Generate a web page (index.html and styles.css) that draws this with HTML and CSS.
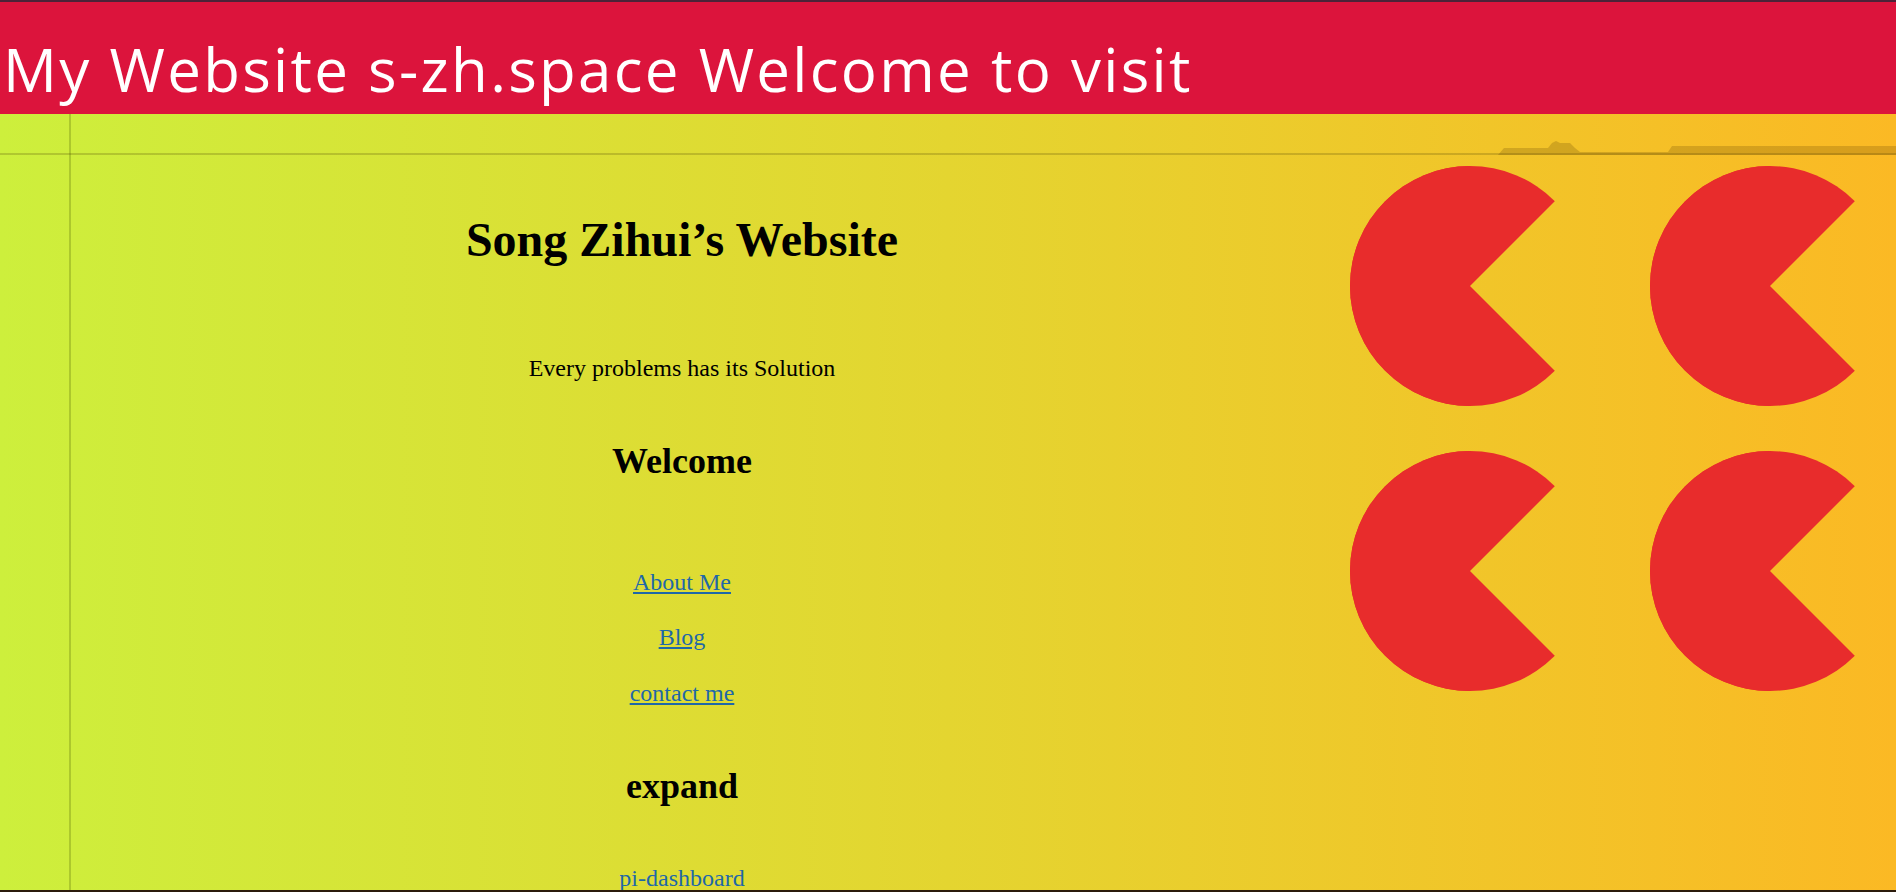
FILE: index.html
```html
<!DOCTYPE html>
<html lang="en">
<head>
<meta charset="utf-8">
<title>My Website s-zh.space</title>
<link rel="stylesheet" href="styles.css">
</head>
<body>
<div class="frame-top"></div>
<header class="banner">
  <h1 class="banner-title">My Website s-zh.space Welcome to visit</h1>
</header>
<div class="stage">
  <svg class="skyline" viewBox="1400 130 496 44" width="496" height="44" aria-hidden="true">
    <path d="M1400 155 L1498 155 L1504 148 L1548 148 L1552 143 L1556 141 L1560 143 L1570 143 L1575 148 L1580 152 L1668 152 L1672 146 L1896 146 L1896 155 Z" fill="rgba(90,60,0,0.22)"/>
  </svg>
  <main class="content">
    <h1 class="site-title">Song Zihui’s Website</h1>
    <p class="motto">Every problems has its Solution</p>
    <h2 class="section welcome">Welcome</h2>
    <a class="nav-link about" href="#">About Me</a>
    <a class="nav-link blog" href="#">Blog</a>
    <a class="nav-link contact" href="#">contact me</a>
    <h2 class="section expand">expand</h2>
    <a class="nav-link plain pi" href="#">pi-dashboard</a>
  </main>
  <aside class="pacmen">
    <div class="pacman"></div>
    <div class="pacman"></div>
    <div class="pacman"></div>
    <div class="pacman"></div>
  </aside>
</div>
<div class="frame-bottom"></div>
</body>
</html>
```
FILE: styles.css
```css
html, body {
  margin: 0;
  padding: 0;
}

body {
  height: 100vh;
  overflow: hidden;
  display: flex;
  flex-direction: column;
  font-family: "Liberation Serif", "Times New Roman", serif;
  background: linear-gradient(to right, #cdef3c 0%, #e4d530 50%, #fbb924 100%);
}

.frame-top {
  height: 2px;
  flex: none;
  background: #4d2238;
}

.frame-bottom {
  height: 2px;
  flex: none;
  background: #2b1b0c;
}

.banner {
  flex: none;
  height: 112px;
  background: #dc143c;
  box-sizing: border-box;
  padding-top: 37px;
}

.banner-title {
  margin: 0;
  padding-left: 3px;
  font-family: "Open Sans", "DejaVu Sans", sans-serif;
  font-weight: 400;
  font-size: 60px;
  line-height: 60px;
  letter-spacing: 2.3px;
  color: #ffffff;
  white-space: nowrap;
}

.stage {
  position: relative;
  flex: 1;
  min-height: 0;
  overflow: hidden;
  display: flex;
  background-image:
    linear-gradient(to bottom, transparent 39px, rgba(70, 60, 0, 0.22) 39px, rgba(70, 60, 0, 0.22) 41px, transparent 41px),
    linear-gradient(to right, transparent 69px, rgba(70, 90, 0, 0.25) 69px, rgba(70, 90, 0, 0.25) 71px, transparent 71px);
}

.skyline {
  position: absolute;
  top: 16px;
  right: 0;
  pointer-events: none;
}

.content {
  position: relative;
  width: 1350px;
  flex: none;
  box-sizing: border-box;
  padding-left: 14px;
  display: flex;
  flex-direction: column;
  align-items: center;
  text-align: center;
}

.site-title {
  margin: 102px 0 0;
  font-size: 48px;
  line-height: 48px;
  font-weight: 700;
  color: #000;
}

.motto {
  margin: 92px 0 0;
  font-size: 24px;
  line-height: 24px;
  color: #000;
}

.section {
  font-size: 36px;
  line-height: 36px;
  font-weight: 700;
  color: #000;
  margin: 0;
}

.welcome { margin-top: 63px; }
.expand { margin-top: 63px; }

.nav-link {
  font-size: 24px;
  line-height: 24px;
  color: #1f68a8;
  text-decoration: underline;
}

.about { margin-top: 91px; }
.blog { margin-top: 31px; }
.contact { margin-top: 32px; }
.pi { margin-top: 62px; }
.plain { text-decoration: none; }

.pacmen {
  position: relative;
  padding-top: 52px;
  display: grid;
  grid-template-columns: 240px 240px;
  grid-auto-rows: 240px;
  column-gap: 60px;
  row-gap: 45px;
  align-content: start;
}

.pacman {
  width: 0;
  height: 0;
  border: 120px solid #e82c2c;
  border-right-color: transparent;
  border-radius: 50%;
}
```
